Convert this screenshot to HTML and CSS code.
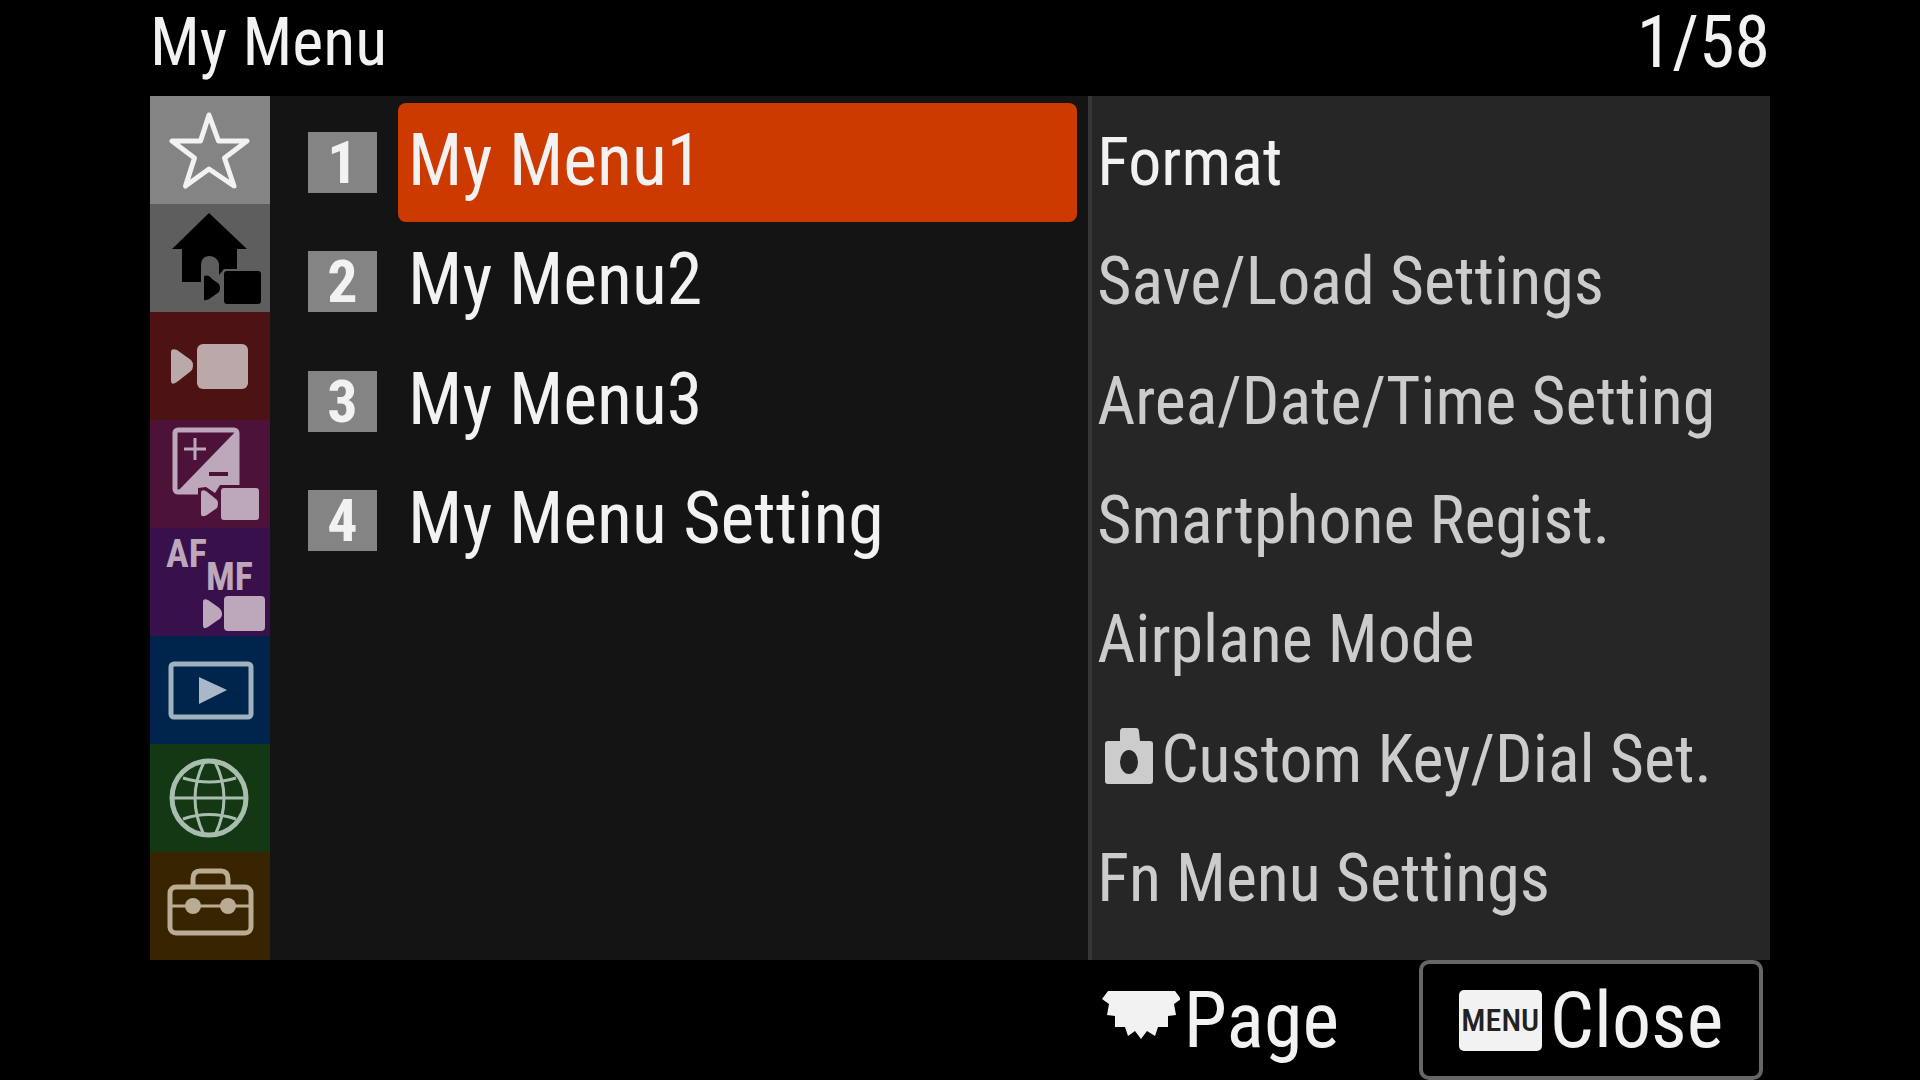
FILE: index.html
```html
<!DOCTYPE html>
<html lang="en">
<head>
    <meta charset="UTF-8">
    <meta name="viewport" content="width=device-width, initial-scale=1.0">
    <title>My Menu</title>
    <link rel="stylesheet" href="styles.css">
</head>
<body>
    <div class="screen">
        <header class="header">
            <h1 class="title">My Menu</h1>
            <span class="title counter">1/58</span>
        </header>

        <main class="panel">
            <nav class="tabs" aria-label="Categories">
                <button type="button" class="tab tab-my" aria-label="My Menu">
                    <svg viewBox="0 0 120 108">
                        <path d="M59 19 L68.500 45 L97 45 L74.500 62 L84 90 L59 73 L35.500 90 L44.500 62 L22 45 L50.500 45 Z" fill="none" stroke="#f2f2f2" stroke-width="5" stroke-linejoin="round"/>
                    </svg>
                </button>
                <button type="button" class="tab tab-main" aria-label="Main">
                    <svg viewBox="0 0 120 108">
                        <path d="M59 9 L97 45 H87 V65 H74 L69 71 V60 Q67 52 59 52 Q51 52 51 62 V78 H32 V45 H22 Z" fill="#000"/>
                        <path d="M54 72 Q59 70 62 75 L69 80 Q71 84 69 88 L62 93 Q58 97 54 96 Z" fill="#000"/>
                        <rect x="74" y="67" width="37" height="33" rx="3" fill="#000"/>
                    </svg>
                </button>
                <button type="button" class="tab tab-shooting" aria-label="Shooting">
                    <svg viewBox="0 0 120 108" fill="#bba9aa">
                        <path d="M21 40 Q21 36 27 38 L41 48 Q43 50 43 54 Q43 57 41 59 L27 70 Q21 74 21 69 Z"/>
                        <rect x="47" y="32" width="51" height="45" rx="6"/>
                    </svg>
                </button>
                <button type="button" class="tab tab-exposure" aria-label="Exposure/Color">
                    <svg viewBox="0 0 120 108">
                        <rect x="25" y="10" width="62" height="62" rx="3" fill="none" stroke="#bda8bb" stroke-width="5"/>
                        <path d="M87 10 V72 H27 Z" fill="#bda8bb"/>
                        <path d="M34 29 H56 M45 18 V40" stroke="#bda8bb" stroke-width="3"/>
                        <path d="M59 54 H78" stroke="#4c1239" stroke-width="4"/>
                        <path d="M48 68 L56 67 L65 73 L70 65 H90 V80 H48 Z" fill="#4c1239"/>
                        <path d="M51 73 Q51 69 56 71 L67 80 Q69 83 67 88 L57 95 Q51 98 51 94 Z" fill="#bda8bb"/>
                        <rect x="71" y="68" width="38" height="32" rx="3" fill="#bda8bb"/>
                    </svg>
                </button>
                <button type="button" class="tab tab-focus" aria-label="Focus">
                    <svg viewBox="0 0 120 108" fill="#bda8bb">
                        <text x="16" y="39" class="tab-text">AF</text>
                        <text x="56" y="62" class="tab-text">MF</text>
                        <path d="M53 74 Q53 70 58 72 L68 79 Q72 82 72 86 Q72 90 68 92 L58 99 Q53 102 53 97 Z"/>
                        <rect x="74" y="68" width="41" height="35" rx="4"/>
                    </svg>
                </button>
                <button type="button" class="tab tab-playback" aria-label="Playback">
                    <svg viewBox="0 0 120 108">
                        <rect x="21" y="28" width="80" height="53" rx="3" fill="none" stroke="#9fb2bd" stroke-width="5"/>
                        <path d="M49 41 L77 54 L49 68 Z" fill="#a8b8c8"/>
                    </svg>
                </button>
                <button type="button" class="tab tab-network" aria-label="Network">
                    <svg viewBox="0 0 120 108" fill="none" stroke="#a9bdae" stroke-width="3">
                        <circle cx="59" cy="54" r="37" stroke-width="5"/>
                        <path d="M22 54 H97 M54 18 Q36 54 54 91 M65 18 Q83 54 65 91 M33 34 Q59 42 86 34 M33 75 Q59 66 86 75"/>
                    </svg>
                </button>
                <button type="button" class="tab tab-setup" aria-label="Setup">
                    <svg viewBox="0 0 120 108" fill="none" stroke="#b9ac93" stroke-width="5">
                        <rect x="20" y="35" width="81" height="46" rx="6"/>
                        <path d="M43 35 V27 Q43 19 50 19 H71 Q78 19 78 27 V35"/>
                        <path d="M20 54 H101" stroke-width="3"/>
                        <circle cx="43" cy="54" r="8" fill="#b9ac93" stroke="none"/>
                        <circle cx="78" cy="54" r="8" fill="#b9ac93" stroke="none"/>
                    </svg>
                </button>
            </nav>

            <div class="menu">
                <button type="button" class="menu-item selected">
                    <span class="number">1</span>
                    <span class="label">My Menu1</span>
                </button>
                <button type="button" class="menu-item">
                    <span class="number">2</span>
                    <span class="label">My Menu2</span>
                </button>
                <button type="button" class="menu-item">
                    <span class="number">3</span>
                    <span class="label">My Menu3</span>
                </button>
                <button type="button" class="menu-item">
                    <span class="number">4</span>
                    <span class="label">My Menu Setting</span>
                </button>
            </div>

            <ul class="preview">
                <li class="current">Format</li>
                <li>Save/Load Settings</li>
                <li>Area/Date/Time Setting</li>
                <li>Smartphone Regist.</li>
                <li>Airplane Mode</li>
                <li>
                    <svg class="camera" viewBox="0 0 48 56">
                        <path fill-rule="evenodd" d="M15 4 Q15 0 18 0 H31 Q34 0 34 4 L35 13 H45 Q48 13 48 16 V53 Q48 56 45 56 H3 Q0 56 0 53 V16 Q0 13 3 13 H15 Z M24 22 A9 12 0 0 0 24 46 A9 12 0 0 0 24 22 Z" fill="#ccc"/>
                    </svg>
                    Custom Key/Dial Set.
                </li>
                <li>Fn Menu Settings</li>
            </ul>
        </main>

        <footer class="footer">
            <button type="button" class="key">
                <svg class="dial" viewBox="0 0 78 48">
                    <path d="M6 0 H73 L79 8 L72 13 L74 24 L66 25 L66 36 L56 36 L53 45 L45 40 L39 48 L33 40 L26 45 L23 36 L13 36 L13 25 L5 24 L7 13 L0 8 Z" fill="#f2f2f2"/>
                </svg>
                Page
            </button>
            <button type="button" class="key close">
                <span class="menu-key">MENU</span>
                Close
            </button>
        </footer>
    </div>
</body>
</html>
```
FILE: styles.css
```css
* {
    box-sizing: border-box;
}
body {
    margin: 0;
    background-color: #000;
    color: #f2f2f2;
    font-family: 'Roboto Condensed', Roboto, sans-serif;
}
button {
    border: none;
    padding: 0;
    background: none;
    color: inherit;
    font-family: inherit;
    cursor: pointer;
}
.screen {
    display: grid;
    grid-template-rows: 96px 1fr 120px;
    min-height: 100vh;
    padding: 0 150px;
}
.header {
    display: flex;
    justify-content: space-between;
}
.title {
    margin: 0;
    font-size: 66px;
    font-weight: 400;
    line-height: 86px;
}
.counter {
    font-size: 72px;
}
.panel {
    display: grid;
    grid-template-columns: 120px minmax(0, 6fr) minmax(0, 5fr);
    background-color: #141414;
}

/* category tabs */
.tabs {
    display: grid;
    grid-template-rows: repeat(8, 1fr);
}
.tab svg {
    display: block;
    width: 120px;
    height: 108px;
}
.tab-my { background-color: #848484; }
.tab-main { background-color: #5e5e5e; }
.tab-shooting { background-color: #4c1214; }
.tab-exposure { background-color: #4c1239; }
.tab-focus { background-color: #38104c; }
.tab-playback { background-color: #00254c; }
.tab-network { background-color: #143814; }
.tab-setup { background-color: #382500; }
.tab-text {
    font-size: 38px;
    font-weight: 700;
}

/* page list */
.menu {
    display: grid;
    grid-template-rows: repeat(7, 1fr);
    padding: 7px 11px 22px 38px;
}
.menu-item {
    display: grid;
    grid-template-columns: 69px 1fr;
    gap: 21px;
    align-items: center;
    text-align: left;
}
.number {
    background-color: #848484;
    font-size: 60px;
    font-weight: 700;
    line-height: 61px;
    text-align: center;
}
.label {
    align-self: stretch;
    padding: 10px;
    border-radius: 8px;
    font-size: 72px;
    line-height: 96px;
    white-space: nowrap;
}
.selected .label {
    background-color: #cc3a00;
}

/* items on the selected page */
.preview {
    display: grid;
    grid-template-rows: repeat(7, 1fr);
    margin: 0;
    padding: 7px 0 22px 5px;
    border-left: 4px solid #363636;
    background-color: #262626;
    color: #ccc;
    font-size: 66px;
    list-style: none;
    white-space: nowrap;
}
.preview li {
    display: flex;
    align-items: center;
}
.preview .current {
    color: #f2f2f2;
}
.camera {
    width: 48px;
    height: 56px;
    margin: 0 8px 6px;
}

/* key guide */
.footer {
    display: flex;
    justify-content: flex-end;
    gap: 80px;
    padding-right: 7px;
}
.key {
    display: flex;
    align-items: center;
    gap: 4px;
    font-size: 78px;
}
.dial {
    width: 78px;
    height: 48px;
    margin-bottom: 10px;
}
.close {
    gap: 8px;
    justify-content: center;
    width: 344px;
    border: 4px solid #666;
    border-radius: 10px;
}
.menu-key {
    width: 83px;
    border-radius: 5px;
    background-color: #f2f2f2;
    color: #222;
    font-size: 32px;
    font-weight: 500;
    line-height: 61px;
    text-align: center;
}
```
